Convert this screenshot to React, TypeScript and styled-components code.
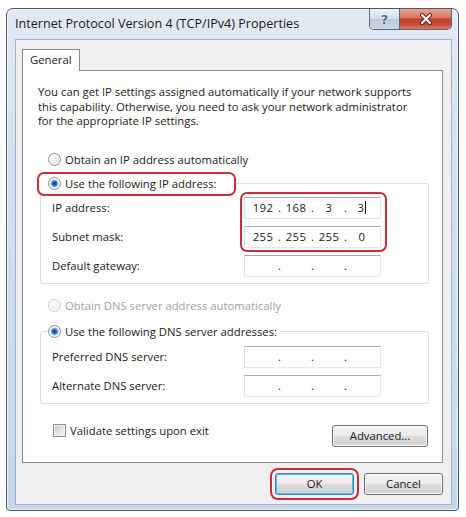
import styled, { createGlobalStyle, css } from "styled-components";

const GlobalStyle = createGlobalStyle`
  html, body {
    margin: 0;
    padding: 0;
    background: #ffffff;
  }
  body {
    font-family: "Open Sans", "Noto Sans", Arial, sans-serif;
    font-size: 11.3px;
    color: #1a1a1a;
  }
  * {
    box-sizing: border-box;
  }
`;

const Page = styled.div`
  padding: 8px 0 0 6px;
`;

const Window = styled.div`
  width: 453px;
  height: 503px;
  display: flex;
  flex-direction: column;
  border: 1px solid #4a5663;
  border-radius: 7px 7px 4px 4px;
  background: linear-gradient(180deg, #e2eaf3 0%, #d3e0ee 30%, #c6d8eb 100%);
  box-shadow: inset 0 0 0 1px rgba(255, 255, 255, 0.7);
  padding: 0 6px 5px 8px;
`;

const TitleBar = styled.div`
  height: 30px;
  flex-shrink: 0;
  display: flex;
  justify-content: space-between;
  align-items: flex-start;
`;

const Title = styled.div`
  margin-top: 7px;
  font-size: 12.6px;
  line-height: 16px;
  color: #1b1b1b;
  white-space: nowrap;
`;

const CaptionGroup = styled.div`
  display: flex;
  height: 21px;
  border: 1px solid #5b6878;
  border-top: none;
  border-radius: 0 0 5px 5px;
  overflow: hidden;
`;

const CaptionButton = styled.div<{ $close?: boolean }>`
  display: flex;
  align-items: center;
  justify-content: center;
  width: ${(p) => (p.$close ? 52 : 29)}px;
  ${(p) =>
    p.$close
      ? css`
          border-left: 1px solid #5b6878;
          background: linear-gradient(180deg, #e9a596 0%, #d97a66 42%, #c4432d 50%, #c54d36 78%, #dc7a5e 100%);
        `
      : css`
          background: linear-gradient(180deg, #eef2f7 0%, #d3dde8 48%, #bccbdb 52%, #cad7e5 100%);
        `}
`;

const HelpGlyph = styled.span`
  font-family: "DejaVu Sans", sans-serif;
  font-weight: bold;
  font-size: 13px;
  color: #5a6776;
  text-shadow: 0 0 2px #ffffff, 0 0 1px #ffffff;
`;

const Client = styled.div`
  flex: 1;
  display: flex;
  flex-direction: column;
  background: #f0f0f0;
  border: 1px solid #9fb2c7;
  padding: 9px 8px 9px 6px;
`;

const TabStrip = styled.div`
  display: flex;
  position: relative;
  z-index: 1;
  margin-bottom: -1px;
`;

const Tab = styled.div`
  height: 22px;
  padding: 0 7px;
  line-height: 20px;
  background: #ffffff;
  border: 1px solid #898c95;
  border-bottom: none;
`;

const TabPanel = styled.div`
  display: flex;
  flex-direction: column;
  background: #ffffff;
  border: 1px solid #898c95;
  padding: 14px 13px 15px 17px;
`;

const Intro = styled.p`
  margin: 0 0 0 -2px;
  line-height: 14.5px;
  white-space: nowrap;
`;

const OptionRow = styled.div<{ $disabled?: boolean; $top: number }>`
  display: flex;
  align-items: center;
  gap: 4px;
  height: 16px;
  margin: ${(p) => p.$top}px 0 0 8px;
  color: ${(p) => (p.$disabled ? "#a2a2a2" : "#1a1a1a")};
  white-space: nowrap;
`;

const Radio = styled.span<{ $checked?: boolean; $disabled?: boolean }>`
  flex-shrink: 0;
  width: 13px;
  height: 13px;
  border-radius: 50%;
  border: 1px solid ${(p) => (p.$disabled ? "#c9c9c9" : "#8c8c8c")};
  box-shadow: inset 0 0 0 1px #ffffff;
  background: ${(p) =>
    p.$checked
      ? "radial-gradient(circle at 50% 50%, #163c6a 0, #2d6db0 2px, #86bbe8 3.4px, #e8eef4 4.3px, #f3f3f3 100%)"
      : p.$disabled
      ? "radial-gradient(circle at 40% 35%, #ffffff 0, #f0f0f0 60%, #e3e3e3 100%)"
      : "radial-gradient(circle at 40% 35%, #ffffff 0, #e4e4e4 60%, #cdcdcd 100%)"};
`;

const GroupBox = styled.div<{ $top: number }>`
  display: flex;
  flex-direction: column;
  margin-top: ${(p) => p.$top}px;
  border: 1px solid #d9dee3;
  border-radius: 3px;
  padding: 0 47px 6px 11px;
`;

const Legend = styled.div<{ $marked?: boolean }>`
  align-self: flex-start;
  display: flex;
  align-items: center;
  gap: 4px;
  height: 24px;
  margin: -12px 0 0 -15px;
  padding: 2px 14px 2px 9px;
  white-space: nowrap;
  background: #ffffff;
  border: 2px solid ${(p) => (p.$marked ? "#cc2f3b" : "transparent")};
  border-radius: 7px;
  background-clip: ${(p) => (p.$marked ? "padding-box" : "content-box")};
`;

const LegendText = styled.span`
  padding-right: 3px;
`;

const FieldGrid = styled.div<{ $top: number }>`
  display: grid;
  grid-template-columns: 1fr 137px;
  grid-auto-rows: 22px;
  row-gap: 7px;
  margin-top: ${(p) => p.$top}px;
`;

const FieldLabel = styled.div`
  display: flex;
  align-items: center;
  white-space: nowrap;
`;

const IpField = styled.div<{ $row: number }>`
  grid-column: 2;
  grid-row: ${(p) => p.$row};
  display: flex;
  align-items: center;
  padding-left: 4px;
  background: #ffffff;
  border: 1px solid #e3e9ef;
  border-top-color: #abadb3;
  border-left-color: #dbdfe6;
`;

const Segment = styled.span`
  width: 28px;
  text-align: center;
  letter-spacing: 0.3px;
`;

const Dot = styled.span`
  width: 5px;
  text-align: center;
`;

const Caret = styled.span`
  display: inline-block;
  width: 1px;
  height: 13px;
  margin-left: 1px;
  vertical-align: -2px;
  background: #000000;
`;

const Highlight = styled.div`
  grid-column: 2;
  grid-row: 1 / span 2;
  margin: -5px -6px -4px -4px;
  border: 2px solid #cc2f3b;
  border-radius: 7px;
  pointer-events: none;
`;

const BottomRow = styled.div`
  display: flex;
  justify-content: space-between;
  align-items: flex-start;
  margin-top: 21px;
`;

const CheckRow = styled.label`
  display: flex;
  align-items: center;
  gap: 4px;
  margin: -2px 0 0 13px;
  height: 16px;
  white-space: nowrap;
`;

const CheckBox = styled.span`
  width: 13px;
  height: 13px;
  border: 1px solid #8e8f8f;
  box-shadow: inset 0 0 0 1px #f4f4f4;
  background: linear-gradient(135deg, #c9ccd2 0%, #e6e7e9 60%, #f7f7f7 100%);
`;

const Button = styled.button<{ $width: number; $default?: boolean; $marked?: boolean }>`
  width: ${(p) => p.$width}px;
  height: 22px;
  padding: 0;
  font: inherit;
  font-size: 11.3px;
  color: #1a1a1a;
  border: 1px solid ${(p) => (p.$default ? "#3c7fb1" : "#707070")};
  border-radius: 3px;
  background: linear-gradient(180deg, #f4f4f4 0%, #ebebeb 48%, #dddddd 52%, #cfcfcf 100%);
  box-shadow: inset 0 0 0 1px ${(p) => (p.$default ? "#4fc6f0" : "#fbfbfb")};
  ${(p) =>
    p.$marked &&
    css`
      outline: 2px solid #cc2f3b;
      outline-offset: 3px;
    `}
`;

const Footer = styled.div`
  display: flex;
  justify-content: flex-end;
  gap: 10px;
  margin-top: 10px;
`;

type Ip = [string, string, string, string];

const IpBox = ({ row, value, caret }: { row: number; value: Ip; caret?: boolean }) => (
  <IpField $row={row}>
    <Segment>{value[0]}</Segment>
    <Dot>.</Dot>
    <Segment>{value[1]}</Segment>
    <Dot>.</Dot>
    <Segment>{value[2]}</Segment>
    <Dot>.</Dot>
    <Segment>
      {value[3]}
      {caret && <Caret />}
    </Segment>
  </IpField>
);

const empty: Ip = ["", "", "", ""];

const CloseIcon = () => (
  <svg width="14" height="12" viewBox="0 0 14 12">
    <path d="M3 2 L11 10 M11 2 L3 10" stroke="#5a1d14" strokeWidth="4" strokeLinecap="round" />
    <path d="M3 2 L11 10 M11 2 L3 10" stroke="#ffffff" strokeWidth="2.2" strokeLinecap="round" />
  </svg>
);

export default function App() {
  return (
    <>
      <GlobalStyle />
      <Page>
        <Window>
          <TitleBar>
            <Title>Internet Protocol Version 4 (TCP/IPv4) Properties</Title>
            <CaptionGroup>
              <CaptionButton>
                <HelpGlyph>?</HelpGlyph>
              </CaptionButton>
              <CaptionButton $close>
                <CloseIcon />
              </CaptionButton>
            </CaptionGroup>
          </TitleBar>

          <Client>
            <TabStrip>
              <Tab>General</Tab>
            </TabStrip>
            <TabPanel>
              <Intro>
                You can get IP settings assigned automatically if your network supports
                <br />
                this capability. Otherwise, you need to ask your network administrator
                <br />
                for the appropriate IP settings.
              </Intro>

              <OptionRow $top={23}>
                <Radio />
                Obtain an IP address automatically
              </OptionRow>

              <GroupBox $top={15}>
                <Legend $marked>
                  <Radio $checked />
                  <LegendText>Use the following IP address:</LegendText>
                </Legend>
                <FieldGrid $top={1}>
                  <FieldLabel>IP address:</FieldLabel>
                  <IpBox row={1} value={["192", "168", "3", "3"]} caret />
                  <FieldLabel>Subnet mask:</FieldLabel>
                  <IpBox row={2} value={["255", "255", "255", "0"]} />
                  <FieldLabel>Default gateway:</FieldLabel>
                  <IpBox row={3} value={empty} />
                  <Highlight />
                </FieldGrid>
              </GroupBox>

              <OptionRow $top={14} $disabled>
                <Radio $disabled />
                Obtain DNS server address automatically
              </OptionRow>

              <GroupBox $top={17}>
                <Legend>
                  <Radio $checked />
                  <LegendText>Use the following DNS server addresses:</LegendText>
                </Legend>
                <FieldGrid $top={2}>
                  <FieldLabel>Preferred DNS server:</FieldLabel>
                  <IpBox row={1} value={empty} />
                  <FieldLabel>Alternate DNS server:</FieldLabel>
                  <IpBox row={2} value={empty} />
                </FieldGrid>
              </GroupBox>

              <BottomRow>
                <CheckRow>
                  <CheckBox />
                  Validate settings upon exit
                </CheckRow>
                <Button $width={96} style={{ marginRight: 1 }}>
                  Advanced...
                </Button>
              </BottomRow>
            </TabPanel>

            <Footer>
              <Button $width={79} $default $marked>
                OK
              </Button>
              <Button $width={79}>Cancel</Button>
            </Footer>
          </Client>
        </Window>
      </Page>
    </>
  );
}
